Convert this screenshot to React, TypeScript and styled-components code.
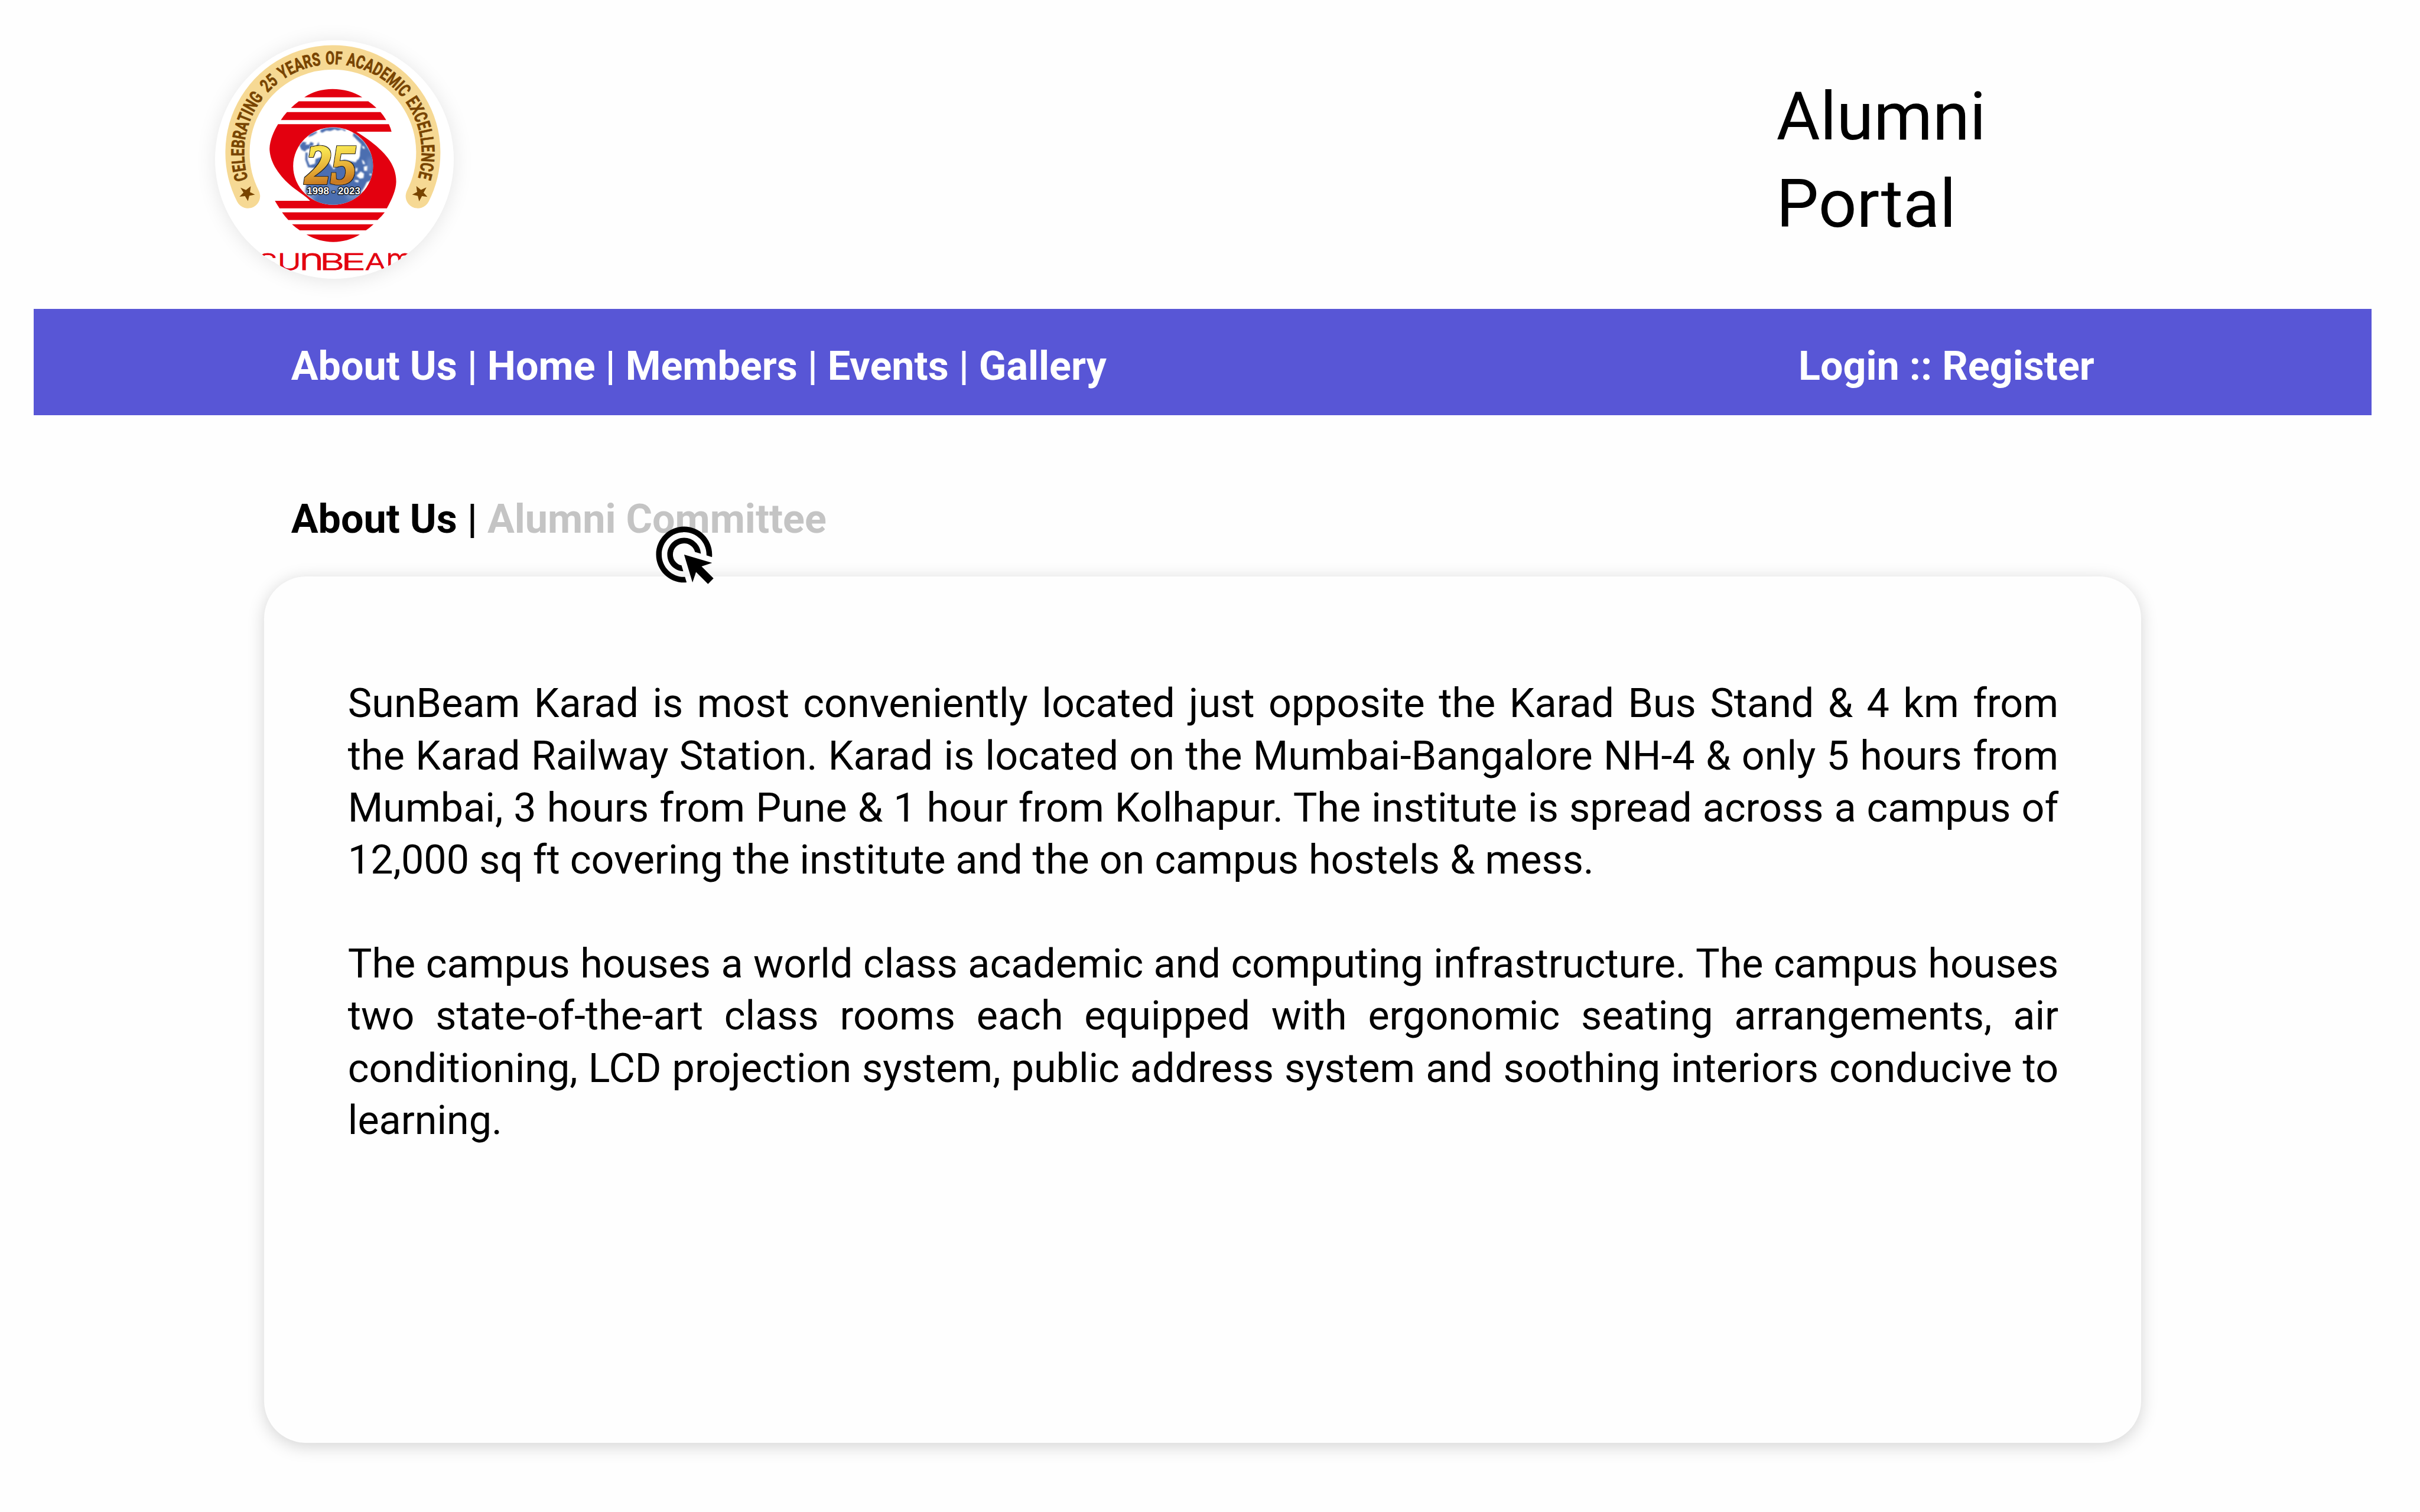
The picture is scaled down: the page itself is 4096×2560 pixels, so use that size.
import React from "react";
import styled, { createGlobalStyle } from "styled-components";

/* One design unit of the 1440 x 900 artboard on the 4096px wide canvas. */
const u = (n: number) => `${(n * 4096) / 1440}px`;

const GlobalStyle = createGlobalStyle`
  * { box-sizing: border-box; }
  html, body { margin: 0; padding: 0; background: #fefefe; overflow: hidden; }
`;

const Page = styled.main`
  display: flex;
  flex-direction: column;
  width: 4096px;
  height: 2560px;
  background: #fefefe;
  color: #000;
  font-family: Roboto, "Liberation Sans", sans-serif;
`;

const Header = styled.header`
  display: flex;
  justify-content: space-between;
  align-items: flex-start;
  height: ${u(184)};
  padding: ${u(24)} ${u(213)} 0 ${u(128)};
`;

const LogoDisc = styled.div`
  width: ${u(142)};
  height: ${u(142)};
  border-radius: 50%;
  background: #fff;
  overflow: hidden;
  box-shadow: 0 ${u(1)} ${u(12)} rgba(0, 0, 0, 0.1);
  svg { display: block; width: 100%; height: 100%; }
`;

const Title = styled.h1`
  width: ${u(170)};
  margin: ${u(19.5)} 0 0;
  font-size: ${u(40)};
  line-height: ${u(52)};
  font-weight: 400;
`;

const NavBar = styled.nav`
  display: flex;
  justify-content: space-between;
  height: ${u(63)};
  margin: 0 ${u(29)} 0 ${u(20)};
  padding: ${u(18.6)} ${u(164.8)} 0 ${u(153.2)};
  background: #5856d6;
  color: #fff;
`;

const Links = styled.div`
  font-size: ${u(24)};
  line-height: ${u(31)};
  font-weight: 700;
  white-space: pre;
`;

const SubNav = styled(Links)`
  position: relative;
  height: ${u(96)};
  padding: ${u(46.5)} 0 0 ${u(173.2)};
`;

const Link = styled.span<{ $muted?: boolean }>`
  color: ${(p) => (p.$muted ? "#c4c4c4" : "inherit")};
`;

const Cursor = styled.svg`
  position: absolute;
  left: ${u(387)};
  top: ${u(63)};
  width: ${u(40)};
  height: ${u(40)};
  z-index: 1;
`;

const Card = styled.section`
  width: ${u(1117)};
  height: ${u(516)};
  margin-left: ${u(157)};
  padding: ${u(60.4)} ${u(49.1)} 0 ${u(50)};
  border-radius: ${u(25)};
  background: #fefefe;
  box-shadow: 0 ${u(2)} ${u(10)} rgba(0, 0, 0, 0.17);
`;

const Paragraph = styled.p`
  margin: 0 0 ${u(31)};
  font-size: ${u(24)};
  line-height: ${u(31)};
  text-align: justify;
`;

const RING_R = 534;
const DEG = (Math.PI * RING_R) / 180;
const RING_WORDS = [
  { text: "CELEBRATING", from: -17.3, to: 38.9 },
  { text: "25", from: 42.6, to: 52.5 },
  { text: "YEARS", from: 55.6, to: 82.4 },
  { text: "OF", from: 85.3, to: 95.8 },
  { text: "ACADEMIC", from: 98.4, to: 141.6 },
  { text: "EXCELLENCE", from: 144.6, to: 196.2 },
];

/* Wordmark letters: each has its own place, stretch and size. */
const WORDMARK = [
  { ch: "S", x: 312, sx: 1.4, size: 136 },
  { ch: "U", x: 432, sx: 1.42, size: 136 },
  { ch: "n", x: 562, sx: 1.43, size: 178 },
  { ch: "B", x: 686, sx: 1.68, size: 136 },
  { ch: "E", x: 814, sx: 1.84, size: 136 },
  { ch: "A", x: 958, sx: 1.37, size: 136 },
  { ch: "m", x: 1084, sx: 1.04, size: 178 },
];

function Logo() {
  return (
    <svg viewBox="56 65 1436 1436" role="img" aria-label="Sunbeam">
      <defs>
        <path id="ring" d="M281 969.7A534 534 0 1 1 1249 969.7" />
        <linearGradient id="gold" x1="0" y1="0" x2="0.12" y2="1">
          <stop offset="0" stopColor="#e9b52c" />
          <stop offset="0.3" stopColor="#f8e552" />
          <stop offset="0.62" stopColor="#e5ad36" />
          <stop offset="0.86" stopColor="#c87820" />
          <stop offset="1" stopColor="#d99a30" />
        </linearGradient>
        <clipPath id="globe">
          <ellipse cx="339" cy="646" rx="285" ry="277" />
        </clipPath>
        <filter id="soft" x="-10%" y="-10%" width="120%" height="120%">
          <feGaussianBlur stdDeviation="4.5" />
        </filter>
        <filter id="haze" x="-20%" y="-20%" width="140%" height="140%">
          <feGaussianBlur stdDeviation="14" />
        </filter>
        <filter id="outline" x="-10%" y="-10%" width="120%" height="120%">
          <feMorphology in="SourceAlpha" operator="dilate" radius="4" result="fat" />
          <feFlood floodColor="#1d1d1b" />
          <feComposite in2="fat" operator="in" result="edge" />
          <feMerge>
            <feMergeNode in="edge" />
            <feMergeNode in="SourceGraphic" />
          </feMerge>
        </filter>
      </defs>

      <path d="M254 1004A574 574 0 1 1 1276 1004" fill="none" stroke="#f6d994" strokeWidth="146" strokeLinecap="round" />
      <text
        fill="#784400"
        stroke="#784400"
        strokeWidth="2.5"
        fontFamily="Roboto, 'Liberation Sans', sans-serif"
        fontWeight="700"
        fontSize="109"
      >
        {RING_WORDS.map((w) => (
          <textPath
            key={w.text}
            href="#ring"
            startOffset={(w.from + 25) * DEG}
            textLength={(w.to - w.from) * DEG}
            lengthAdjust="spacingAndGlyphs"
          >
            {w.text}
          </textPath>
        ))}
      </text>
      <g fill="#784400">
        <path d="M271 944L266 980L296 995L262 1002L254 1034L236 1004L203 1007L227 982L209 953L242 967Z" />
        <path d="M1267 943L1295 966L1328 951L1311 983L1334 1008L1301 1004L1284 1036L1276 1003L1242 995L1272 979Z" />
      </g>

      <g fill="#e3000f">
        <path d="M593 409C640 376 700 359 763 359C830 359 892 376 942 409Z" />
        <path d="M560 433H978Q1003 450 1027 473H513Q536 450 560 433Z" />
        <path d="M489 498H1052Q1071 520 1086 546H452Q470 518 489 498Z" />
        <path d="M435 571H1102Q1112 593 1118 616H906C985 664 1050 715 1094 772C1128 817 1146 862 1146 917C1145 965 1122 1020 1090 1077H444Q429 1055 416 1032H628C612 1012 555 975 520 948C440 880 385 800 384 718C386 665 410 612 435 571Z" />
        <path d="M459 1101H1077Q1058 1126 1034 1148H497Q476 1126 459 1101Z" />
        <path d="M519 1173H1010Q987 1194 964 1210H566Q541 1193 519 1173Z" />
        <path d="M606 1235H927C880 1264 825 1280 767 1280C710 1280 655 1264 606 1235Z" />
      </g>

      <g transform="translate(480.5 278.2) scale(.843)">
        <ellipse cx="339" cy="646" rx="285" ry="277" fill="#fff" />
        <g clipPath="url(#globe)">
          <g filter="url(#soft)" fill="#4c6eb0">
            <path d="M250 388Q330 350 430 388L425 398L400 385L372 392L350 384L320 396L290 392L262 408L248 402Z" />
            <path d="M170 420L222 398L224 408L192 428L160 440Z" />
            <path d="M100 500L122 472L150 478L140 492L168 494L178 474L200 482L196 500L172 505L178 518L150 528L138 542L112 528Z" />
            <path d="M212 515L236 474L240 494L228 520Z" />
            <path d="M142 548L158 552L156 600L172 640L210 630L214 596L250 582L300 612L345 672L372 620L420 600L500 620L530 575L524 500L480 430L486 405L560 470L640 600L630 740L580 760L560 800L520 860L480 920L400 940L230 920L140 830L150 760L200 720L210 660L160 655L140 600Z" />
          </g>
          <g filter="url(#haze)" fill="#8ba6d6" opacity=".6">
            <ellipse cx="180" cy="840" rx="40" ry="50" />
            <ellipse cx="500" cy="860" rx="70" ry="30" />
            <ellipse cx="330" cy="800" rx="60" ry="16" />
            <ellipse cx="600" cy="640" rx="14" ry="60" />
          </g>
          <g filter="url(#soft)" fill="#fff">
            <path d="M480 430L540 490L528 560L520 600L500 590L490 500Z" />
            <path d="M545 500L562 508L566 524L550 520Z" />
            <path d="M544 600L560 612L568 634L552 632Z" />
            <path d="M558 650L584 644L582 680L560 680Z" />
            <path d="M505 715L536 684L560 700L556 732L530 736Z" />
            <path d="M492 746L522 748L518 764L496 758Z" />
            <path d="M500 660L514 660L510 685L498 682Z" />
            <path d="M598 700L614 700L612 714L600 714Z" />
          </g>
        </g>
      </g>

      <text
        transform="translate(600 924) scale(.92 1)"
        fontFamily="'Liberation Serif', serif"
        fontWeight="700"
        fontStyle="italic"
        fontSize="332"
        fill="url(#gold)"
        stroke="url(#gold)"
        strokeWidth="12"
        filter="url(#outline)"
      >
        25
      </text>
      <text
        x="608"
        y="992"
        textLength="322"
        fontFamily="'Liberation Sans', Arial, sans-serif"
        fontWeight="700"
        fontSize="60"
        fill="#fff"
        stroke="#000"
        strokeWidth="8"
        strokeLinejoin="round"
        paintOrder="stroke"
      >
        1998 - 2023
      </text>

      <g
        fill="#e3000f"
        stroke="#e3000f"
        strokeWidth="3"
        fontFamily="Inter, 'Liberation Sans', sans-serif"
        fontWeight="300"
      >
        {WORDMARK.map((l) => (
          <text key={l.ch} transform={`translate(${l.x} 1448) scale(${l.sx} 1)`} fontSize={l.size}>
            {l.ch}
          </text>
        ))}
      </g>
    </svg>
  );
}

export default function App() {
  return (
    <Page>
      <GlobalStyle />
      <Header>
        <LogoDisc>
          <Logo />
        </LogoDisc>
        <Title>Alumni Portal</Title>
      </Header>
      <NavBar>
        <Links>About Us | Home | Members | Events | Gallery</Links>
        <Links>Login :: Register</Links>
      </NavBar>
      <SubNav as="nav">
        <Link>About Us | </Link>
        <Link $muted>Alumni Committee</Link>
        <Cursor viewBox="0 0 24 24" aria-hidden="true">
          <path d="M11.71 17.99C8.53 17.84 6 15.22 6 12c0-3.31 2.69-6 6-6 3.22 0 5.84 2.53 5.99 5.71l-2.1-.63C15.48 9.31 13.89 8 12 8c-2.21 0-4 1.79-4 4 0 1.89 1.31 3.48 3.08 3.89l.63 2.1zM22 12c0 .3-.01.6-.04.9l-1.97-.59c.01-.1.01-.21.01-.31 0-4.42-3.58-8-8-8s-8 3.58-8 8 3.58 8 8 8c.1 0 .21 0 .31-.01l.59 1.97c-.3.03-.6.04-.9.04-5.52 0-10-4.48-10-10S6.48 2 12 2s10 4.48 10 10zm-3.77 4.26L22 15l-10-3 3 10 1.26-3.77 4.27 4.27 1.98-1.98-4.28-4.26z" />
        </Cursor>
      </SubNav>
      <Card>
        <Paragraph>
          SunBeam Karad is most conveniently located just opposite the Karad Bus Stand &amp; 4 km from the Karad
          Railway Station. Karad is located on the Mumbai-Bangalore NH-4 &amp; only 5 hours from Mumbai, 3 hours from
          Pune &amp; 1 hour from Kolhapur. The institute is spread across a campus of 12,000 sq ft covering the
          institute and the on campus hostels &amp; mess.
        </Paragraph>
        <Paragraph>
          The campus houses a world class academic and computing infrastructure. The campus houses two
          state-of-the-art class rooms each equipped with ergonomic seating arrangements, air conditioning, LCD
          projection system, public address system and soothing interiors conducive to learning.
        </Paragraph>
      </Card>
    </Page>
  );
}
